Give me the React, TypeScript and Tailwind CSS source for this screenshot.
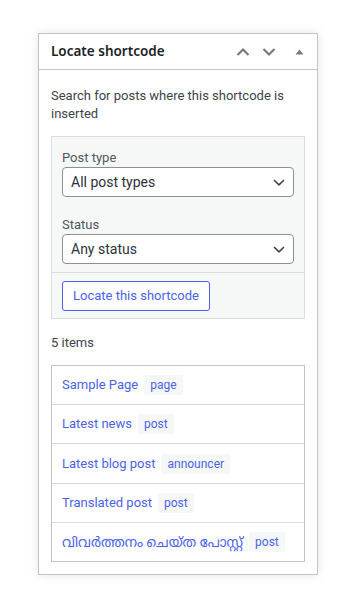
import React from "react";

const FONT = { fontFamily: 'Roboto, "Noto Sans", sans-serif' };

function ChevronUp() {
  return (
    <svg width="14" height="10" viewBox="0 0 14 10" fill="none">
      <path d="M1.5 8 L7 2.5 L12.5 8" stroke="#787c82" strokeWidth="2.2" />
    </svg>
  );
}
function ChevronDown() {
  return (
    <svg width="14" height="10" viewBox="0 0 14 10" fill="none">
      <path d="M1.5 2 L7 7.5 L12.5 2" stroke="#787c82" strokeWidth="2.2" />
    </svg>
  );
}
function Triangle() {
  return (
    <svg width="9" height="6" viewBox="0 0 9 6">
      <path d="M0.5 5.5 L4.5 0.5 L8.5 5.5 Z" fill="#787c82" />
    </svg>
  );
}
function SelectChevron() {
  return (
    <svg width="12" height="7" viewBox="0 0 12 7" fill="none">
      <path d="M1 1 L6 5.8 L11 1" stroke="#3c434a" strokeWidth="1.6" />
    </svg>
  );
}

function Select({ value }: { value: string }) {
  return (
    <div className="flex h-[30px] w-full items-center justify-between rounded-[4px] border border-[#8c8f94] bg-white pl-[8px] pr-[8px] text-[14px] text-[#2c3338]">
      <span>{value}</span>
      <SelectChevron />
    </div>
  );
}

const items = [
  { title: "Sample Page", type: "page", ml: false },
  { title: "Latest news", type: "post", ml: false },
  { title: "Latest blog post", type: "announcer", ml: false },
  { title: "Translated post", type: "post", ml: false },
  { title: "വിവർത്തനം ചെയ്ത പോസ്റ്റ്", type: "post", ml: true },
];

export default function App() {
  return (
    <div className="min-h-[600px] w-[350px] bg-white pl-[38px] pt-[33px]" style={FONT}>
      <div className="w-[280px] border border-[#c3c4c7] bg-white shadow-[0_0_10px_rgba(0,0,0,0.10)]">
        <div className="flex h-[36px] items-center justify-between border-b border-[#c3c4c7] pl-[12px] pr-[13px]">
          <span className="text-[13.5px] font-semibold text-[#1d2327]" style={{ fontFamily: '"Noto Sans", sans-serif' }}>Locate shortcode</span>
          <div className="flex items-center">
            <span className="flex w-[14px] justify-center"><ChevronUp /></span>
            <span className="ml-[12px] flex w-[14px] justify-center"><ChevronDown /></span>
            <span className="ml-[19px] flex w-[9px] justify-center"><Triangle /></span>
          </div>
        </div>
        <div className="px-[12px] pb-[12px] pt-[17px] text-[13px] leading-[18px] text-[#3c434a]">
          <p>Search for posts where this shortcode is inserted</p>
          <div className="mt-[13px] border border-[#dcdcde] bg-[#f6f7f7]">
            <div className="px-[10px] pb-[8px] pt-[12px]">
              <div className="text-[#50575e]">Post type</div>
              <Select value="All post types" />
              <div className="mt-[19px] text-[#50575e]">Status</div>
              <Select value="Any status" />
            </div>
            <div className="border-t border-[#dcdcde] px-[10px] pb-[7px] pt-[8px]">
              <div className="inline-flex h-[30px] items-center rounded-[3px] border border-[#4b63ec] bg-white px-[10px] text-[13px] text-[#4b63ec]">
                Locate this shortcode
              </div>
            </div>
          </div>
          <div className="mt-[15px] text-[#3c434a]">5 items</div>
          <div className="mt-[13px] border-x border-b border-[#c3c4c7]">
            {items.map((it, i) => (
              <div
                key={i}
                className={`flex items-center border-t pl-[10px] ${i === 0 ? "border-[#c3c4c7]" : "border-[#dcdcde]"} ${i === 2 ? "h-[40px]" : "h-[39px]"}`}
              >
                <span
                  className={`${it.ml ? "text-[13.5px]" : "text-[13px]"} text-[#4b63ec]`}
                  style={{ fontFamily: 'Roboto, "Noto Sans", "Noto Sans Malayalam", sans-serif' }}
                >
                  {it.title}
                </span>
                <span className="ml-[6px] flex h-[20px] items-center rounded-[2px] bg-[#f6f7f7] px-[6px] text-[12px] text-[#4b63ec]">
                  {it.type}
                </span>
              </div>
            ))}
          </div>
        </div>
      </div>
    </div>
  );
}
